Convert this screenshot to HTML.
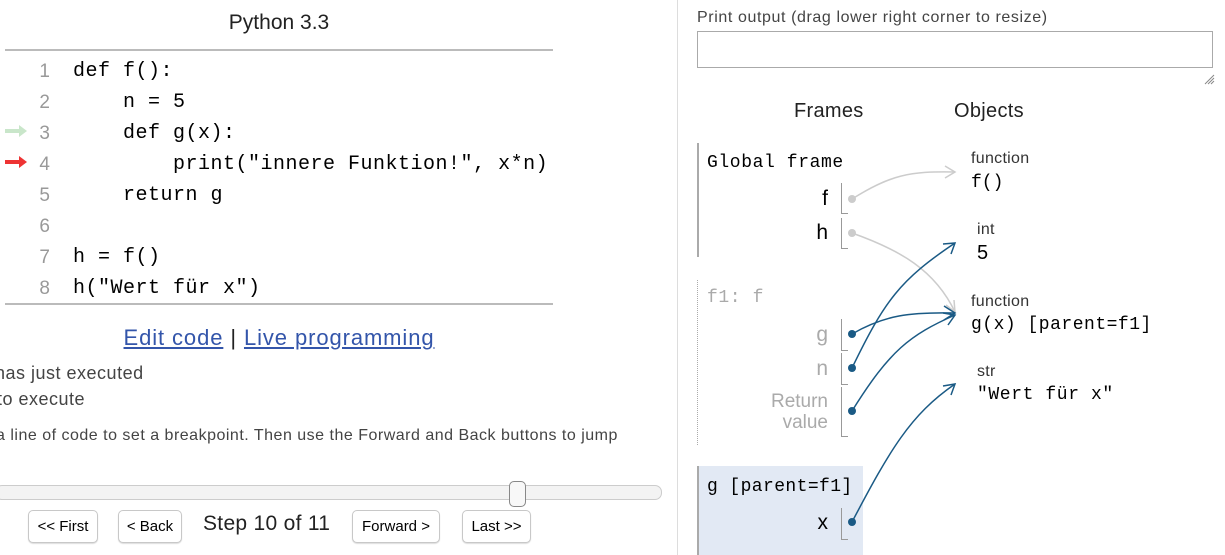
<!DOCTYPE html>
<html><head><meta charset="utf-8">
<style>
*{margin:0;padding:0;box-sizing:border-box}
body{width:1225px;height:555px;background:#fff;position:relative;overflow:hidden;font-family:"Liberation Sans",sans-serif;color:#000}
.a{position:absolute;white-space:pre}
.m{font-family:"Liberation Mono",monospace}
.code{font-size:20px;letter-spacing:0.5px;line-height:30px;height:30px}
.ln{color:#999;font-family:"Liberation Sans",sans-serif;font-size:19px;width:20px;text-align:right;line-height:30px}
.btn{position:absolute;top:510px;height:33px;border:1px solid #c8c8c8;border-radius:5px;background:#fff;font-size:15px;line-height:31px;text-align:center;box-shadow:0 1px 1px #ddd}
.brk{position:absolute;left:841px;width:7px;border-left:1px solid #999;border-bottom:1px solid #999}
.vn{position:absolute;right:397px;font-size:21px;text-align:right;line-height:22px}
.lbl{position:absolute;font-size:16px;letter-spacing:0.3px;color:#333;line-height:16px}
</style></head><body>
<div class="a" style="left:0;width:558px;top:11px;text-align:center;font-size:21px;color:#222">Python 3.3</div>
<div class="a" style="left:5px;width:548px;top:49px;height:2px;background:#bbb"></div>
<div class="a" style="left:5px;width:548px;top:303px;height:2px;background:#bbb"></div>

<div class="a ln" style="left:30px;top:57px">1</div>
<div class="a ln" style="left:30px;top:88px">2</div>
<div class="a ln" style="left:30px;top:119px">3</div>
<div class="a ln" style="left:30px;top:150px">4</div>
<div class="a ln" style="left:30px;top:181px">5</div>
<div class="a ln" style="left:30px;top:212px">6</div>
<div class="a ln" style="left:30px;top:243px">7</div>
<div class="a ln" style="left:30px;top:274px">8</div>
<svg class="a" style="left:0;top:0" width="40" height="180">
<path d="M5 131 H22" stroke="#c9e6ca" stroke-width="4"/><path d="M19 125 L27 131 L19 137 Z" fill="#c9e6ca"/>
<path d="M5 162 H22" stroke="#e33" stroke-width="4"/><path d="M19 156 L27 162 L19 168 Z" fill="#e33"/>
</svg>
<div class="a m code" style="left:73px;top:57px">def f():</div>
<div class="a m code" style="left:73px;top:88px">    n = 5</div>
<div class="a m code" style="left:73px;top:119px">    def g(x):</div>
<div class="a m code" style="left:73px;top:150px">        print("innere Funktion!", x*n)</div>
<div class="a m code" style="left:73px;top:181px">    return g</div>
<div class="a m code" style="left:73px;top:243px">h = f()</div>
<div class="a m code" style="left:73px;top:274px">h("Wert für x")</div>

<div class="a" style="left:0;width:558px;top:325px;text-align:center;font-size:22px;letter-spacing:0.9px;color:#222"><span style="color:#3355aa;text-decoration:underline">Edit code</span> | <span style="color:#3355aa;text-decoration:underline">Live programming</span></div>
<div class="a" style="left:-5px;top:363px;font-size:18px;letter-spacing:0.5px;color:#444">has just executed</div>
<div class="a" style="left:-3px;top:389px;font-size:18px;letter-spacing:0.5px;color:#444">to execute</div>
<div class="a" style="left:-4px;top:427px;font-size:16px;letter-spacing:0.5px;color:#444">a line of code to set a breakpoint. Then use the Forward and Back buttons to jump</div>

<div class="a" style="left:-5px;top:485px;width:667px;height:15px;border:1px solid #ccc;border-radius:7px;background:#f3f3f3"></div>
<div class="a" style="left:509px;top:481px;width:17px;height:26px;border:1px solid #888;border-radius:5px;background:#f8f8f8"></div>
<div class="btn" style="left:28px;width:70px">&lt;&lt; First</div>
<div class="btn" style="left:118px;width:64px">&lt; Back</div>
<div class="a" style="left:203px;top:512px;font-size:21px;letter-spacing:0.3px;color:#222">Step 10 of 11</div>
<div class="btn" style="left:352px;width:88px">Forward &gt;</div>
<div class="btn" style="left:462px;width:69px">Last &gt;&gt;</div>

<div class="a" style="left:677px;top:0;width:1px;height:555px;background:#ddd"></div>

<div class="a" style="left:697px;top:9px;font-size:16px;letter-spacing:0.6px;color:#444">Print output (drag lower right corner to resize)</div>
<div class="a" style="left:697px;top:31px;width:516px;height:37px;border:1px solid #aaa"></div>
<svg class="a" style="left:1203px;top:73px" width="12" height="12"><path d="M2 11 L11 2 M5 11 L11 5 M8 11 L11 8" stroke="#888" stroke-width="1"/></svg>
<div class="a" style="left:794px;top:100px;font-size:20px;letter-spacing:0.3px;color:#222">Frames</div>
<div class="a" style="left:954px;top:100px;font-size:20px;letter-spacing:0.3px;color:#222">Objects</div>

<div class="a" style="left:697px;top:143px;width:2px;height:114px;background:#aaa"></div>
<div class="a m" style="left:707px;top:153px;font-size:18px;letter-spacing:0.6px">Global frame</div>
<div class="vn" style="top:188px">f</div>
<div class="vn" style="top:222px">h</div>
<div class="brk" style="top:183px;height:31px"></div>
<div class="brk" style="top:218px;height:31px"></div>

<div class="a" style="left:697px;top:280px;height:165px;border-left:1px dotted #aaa"></div>
<div class="a m" style="left:707px;top:288px;font-size:18px;color:#aaa;letter-spacing:0.6px">f1: f</div>
<div class="vn" style="top:324px;color:#aaa">g</div>
<div class="vn" style="top:358px;color:#aaa">n</div>
<div class="vn" style="top:391px;color:#aaa;font-size:19px;line-height:21px">Return<br>value</div>
<div class="brk" style="top:319px;height:32px"></div>
<div class="brk" style="top:353px;height:32px"></div>
<div class="brk" style="top:387px;height:50px"></div>

<div class="a" style="left:697px;top:466px;width:166px;height:89px;background:#e2e9f4"></div>
<div class="a" style="left:697px;top:466px;width:2px;height:89px;background:#aaa"></div>
<div class="a m" style="left:707px;top:477px;font-size:18px;letter-spacing:0.4px">g [parent=f1]</div>
<div class="vn" style="top:512px">x</div>
<div class="brk" style="top:508px;height:32px"></div>

<div class="lbl" style="left:971px;top:151px">function</div>
<div class="a m" style="left:971px;top:173px;font-size:18px">f()</div>
<div class="lbl" style="left:977px;top:222px">int</div>
<div class="a" style="left:977px;top:242px;font-size:20px">5</div>
<div class="lbl" style="left:971px;top:294px">function</div>
<div class="a m" style="left:971px;top:315px;font-size:18px;letter-spacing:0.5px">g(x) [parent=f1]</div>
<div class="lbl" style="left:977px;top:364px">str</div>
<div class="a m" style="left:977px;top:385px;font-size:18px;letter-spacing:0.6px">"Wert für x"</div>

<svg class="a" style="left:0;top:0" width="1225" height="555" fill="none">
<g stroke="#ccc" stroke-width="1.5">
<path d="M852 199 C890 175 910 171 955 172"/><path d="M945 166 L955 172 L945 178"/>
<path d="M852 233 C900 250 935 270 955 312"/><path d="M946 305 L955 312 L954 300"/>
</g>
<g stroke="#1a5a85" stroke-width="1.5">
<path d="M852 334 C885 315 910 312 955 313"/><path d="M944 306 L955 313 L944 320"/>
<path d="M852 368 C885 300 900 280 955 243"/><path d="M943 244 L955 243 L951 254"/>
<path d="M852 411 C890 350 910 335 955 315"/><path d="M943 313 L955 315 L948 325"/>
<path d="M852 522 C890 450 910 415 955 384"/><path d="M943 386 L955 384 L951 395"/>
</g>
<g fill="#ccc"><circle cx="852" cy="199" r="4"/><circle cx="852" cy="233" r="4"/></g>
<g fill="#1a5a85"><circle cx="852" cy="334" r="4"/><circle cx="852" cy="368" r="4"/><circle cx="852" cy="411" r="4"/><circle cx="852" cy="522" r="4"/></g>
</svg>
</body></html>
